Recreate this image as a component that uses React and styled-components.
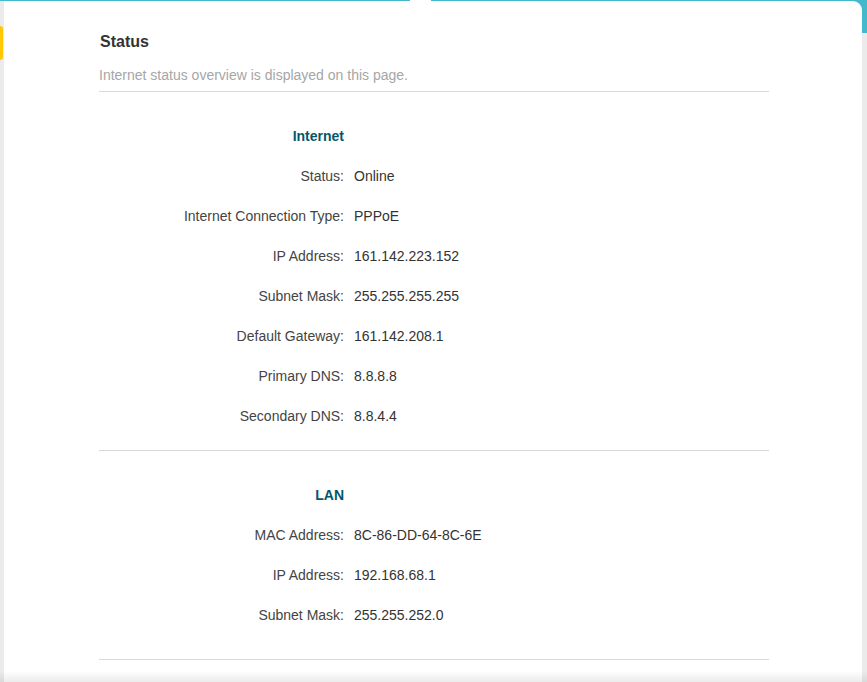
import React from "react";
import styled, { createGlobalStyle } from "styled-components";

const GlobalStyle = createGlobalStyle`
  html, body {
    margin: 0;
    padding: 0;
    height: 100%;
    overflow: hidden;
  }
  body {
    font-family: "Liberation Sans", Arial, sans-serif;
    background: #ebebeb;
  }
`;

const Page = styled.div`
  height: 100vh;
  display: flex;
  background: linear-gradient(to bottom, #45b8cc 0, #45b8cc 33px, #ebebeb 33px);
  position: relative;
  overflow: hidden;

  &::after {
    content: "";
    position: absolute;
    left: 0;
    right: 0;
    bottom: 0;
    height: 11px;
    background: linear-gradient(to bottom, rgba(0, 0, 0, 0), rgba(0, 0, 0, 0.08));
    pointer-events: none;
  }
`;

const SideRail = styled.div`
  width: 4px;
  flex: none;
  background: #ebebeb;
  padding-top: 25px;
  margin-top: 1px;
`;

const Tab = styled.div`
  width: 3px;
  height: 34px;
  background: #ffc800;
  border-radius: 0 3px 3px 0;
`;

const Card = styled.div`
  position: relative;
  margin-top: 1px;
  width: 858px;
  flex: none;
  background: #fff;
  border-radius: 0 9px 0 0;
  padding: 31px 0 0 95px;
  box-sizing: border-box;

  &::before {
    content: "";
    position: absolute;
    top: -1px;
    left: 406px;
    width: 21px;
    height: 1px;
    background: #fff;
  }
`;

const Content = styled.div`
  width: 670px;
`;

const Title = styled.h2`
  margin: 0;
  font-size: 16px;
  line-height: 20px;
  font-weight: bold;
  color: #333;
  padding-left: 1px;
`;

const Subtitle = styled.p`
  margin: 13px 0 0;
  font-size: 14px;
  line-height: 20px;
  color: #a6a6a6;
  padding-bottom: 6px;
`;

const Divider = styled.hr`
  margin: 0;
  border: none;
  border-top: 1px solid #d9d9d9;
`;

const Section = styled.section`
  padding: 24px 0 ${(p) => p.$bottom}px;
`;

const Row = styled.div`
  display: grid;
  grid-template-columns: 245px 1fr;
  column-gap: 10px;
  height: 40px;
  align-items: center;
  font-size: 14px;
`;

const Label = styled.span`
  text-align: right;
  color: #444;
`;

const Value = styled.span`
  color: #333;
`;

const SectionTitle = styled.span`
  text-align: right;
  font-weight: bold;
  color: #065669;
`;

const sections = [
  {
    title: "Internet",
    bottom: 14,
    rows: [
      ["Status", "Online"],
      ["Internet Connection Type", "PPPoE"],
      ["IP Address", "161.142.223.152"],
      ["Subnet Mask", "255.255.255.255"],
      ["Default Gateway", "161.142.208.1"],
      ["Primary DNS", "8.8.8.8"],
      ["Secondary DNS", "8.8.4.4"],
    ],
  },
  {
    title: "LAN",
    bottom: 24,
    rows: [
      ["MAC Address", "8C-86-DD-64-8C-6E"],
      ["IP Address", "192.168.68.1"],
      ["Subnet Mask", "255.255.252.0"],
    ],
  },
];

export default function App() {
  return (
    <>
      <GlobalStyle />
      <Page>
        <SideRail>
          <Tab />
        </SideRail>
        <Card>
          <Content>
            <Title>Status</Title>
            <Subtitle>Internet status overview is displayed on this page.</Subtitle>
            <Divider />
            {sections.map((s) => (
              <React.Fragment key={s.title}>
                <Section $bottom={s.bottom}>
                  <Row>
                    <SectionTitle>{s.title}</SectionTitle>
                  </Row>
                  {s.rows.map(([label, value]) => (
                    <Row key={label}>
                      <Label>{label}:</Label>
                      <Value>{value}</Value>
                    </Row>
                  ))}
                </Section>
                <Divider />
              </React.Fragment>
            ))}
          </Content>
        </Card>
      </Page>
    </>
  );
}
